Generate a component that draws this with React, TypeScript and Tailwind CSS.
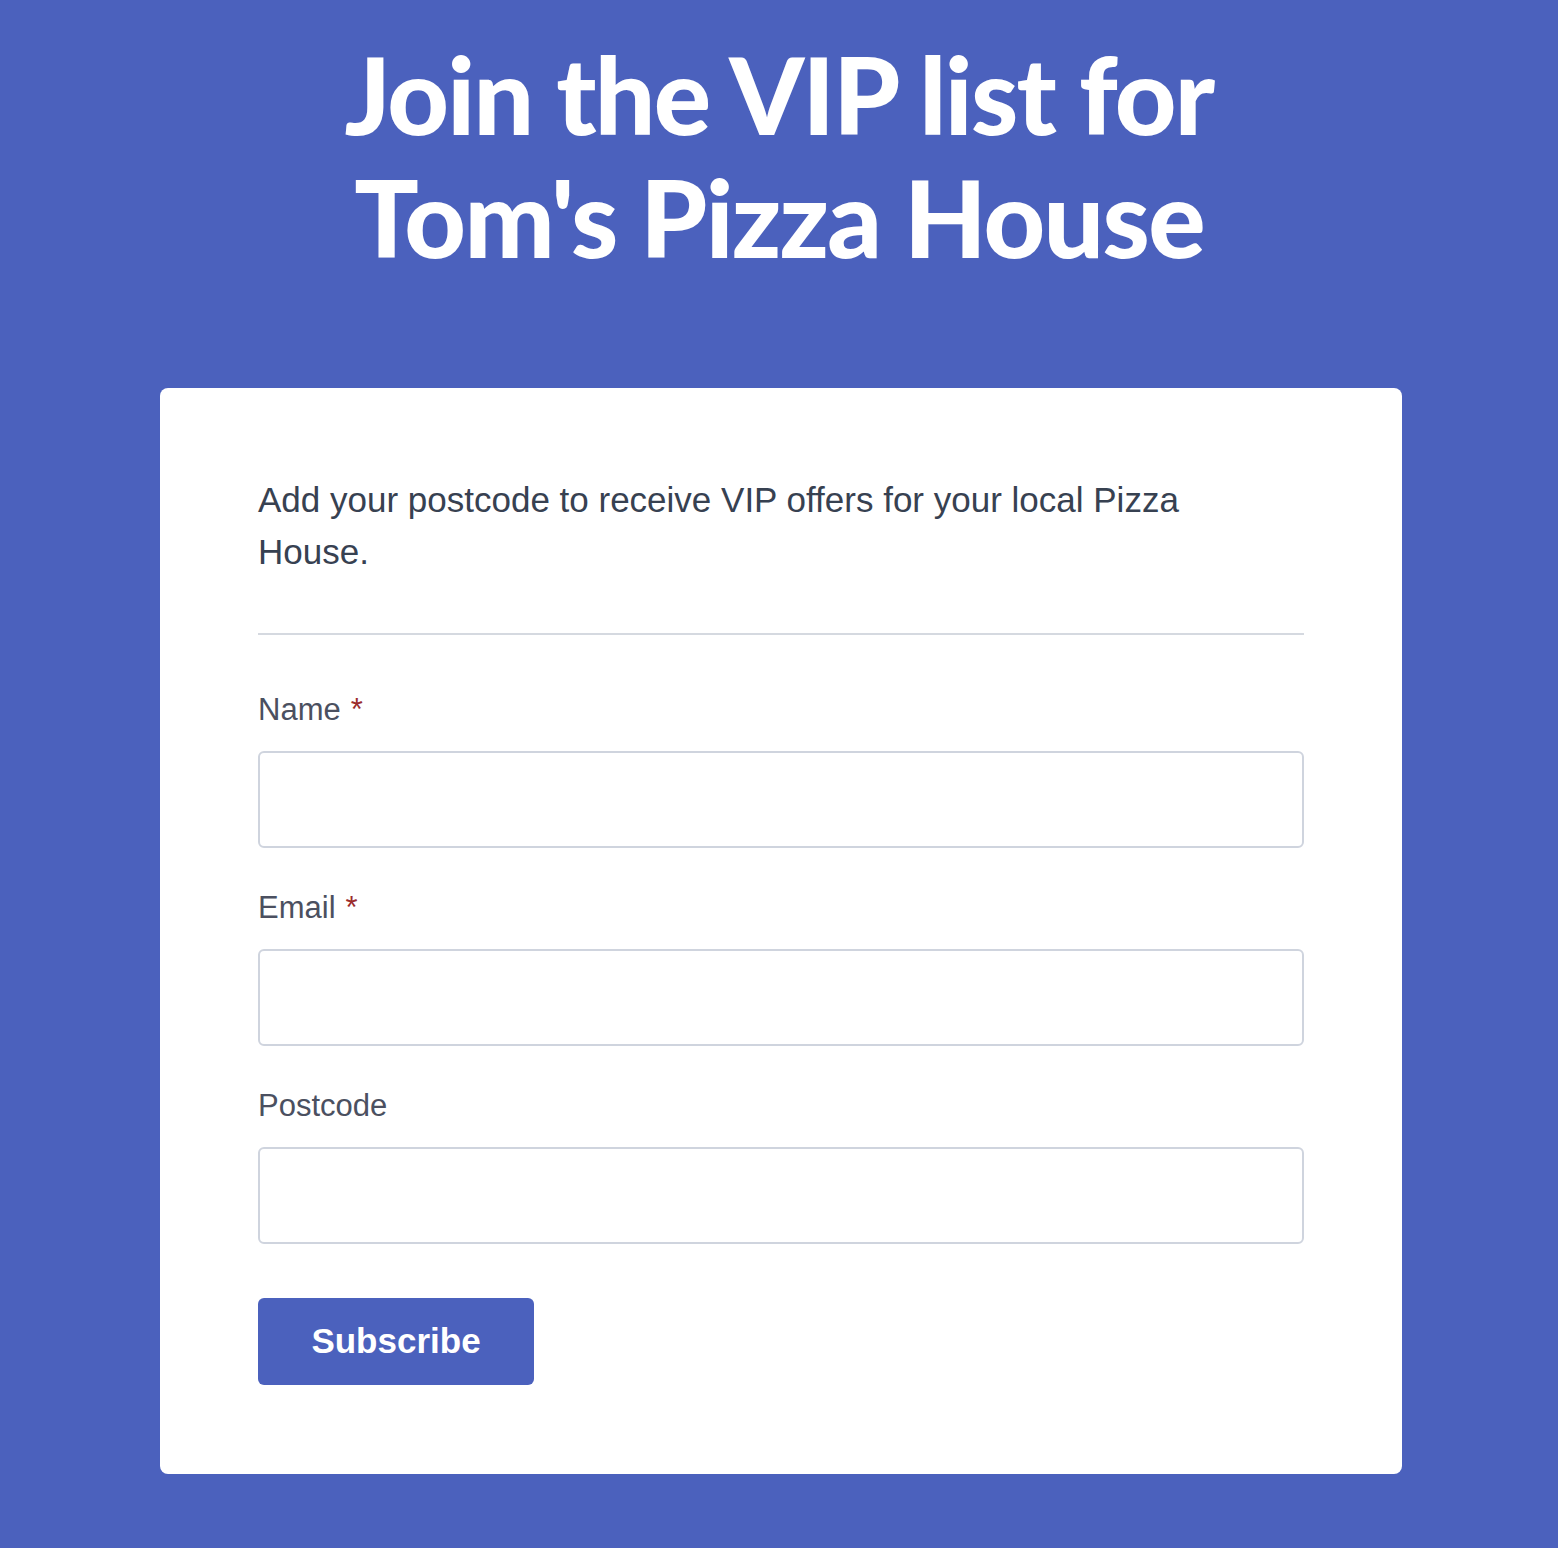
import React from "react";

const fields = [
  { label: "Name", required: true, type: "text" },
  { label: "Email", required: true, type: "email" },
  { label: "Postcode", required: false, type: "text" },
];

export default function App() {
  return (
    <div className="min-h-screen w-full bg-[#4b61bd] pt-[32px] pb-[74px]">
      {/* Heading */}
      <h1 className="text-center font-['Lato',sans-serif] font-black text-white text-[107px] leading-[123px] tracking-[-1.7px]">
        Join the VIP list for
        <br />
        Tom's Pizza House
      </h1>

      {/* Card */}
      <div className="ml-[160px] mt-[110px] w-[1242px] rounded-[8px] bg-white px-[98px] pt-[86px] pb-[89px] font-['Liberation_Sans',Arial,sans-serif]">
        <p className="max-w-[960px] text-[35px] leading-[52px] text-[#374151]">
          Add your postcode to receive VIP offers for your local Pizza House.
        </p>

        <div className="mt-[55px] mb-[52px] h-[2px] bg-[#d5d9e0]" />

        <form className="flex flex-col gap-[37px]" onSubmit={(e) => e.preventDefault()}>
          {fields.map((f) => (
            <div key={f.label} className="flex flex-col gap-[19px]">
              <label className="text-[31px] leading-[45px] text-[#4b5060]">
                {f.label}
                {f.required && <span className="ml-[10px] text-[#9b2c2c]">*</span>}
              </label>
              <input
                type={f.type}
                className="h-[97px] w-full rounded-[6px] border-2 border-[#cfd4de] bg-white px-4 text-[30px] outline-none"
              />
            </div>
          ))}

          <div className="pt-[17px]">
            <button
              type="submit"
              className="h-[87px] w-[276px] rounded-[6px] bg-[#4b61bd] text-[35px] font-bold text-white"
            >
              Subscribe
            </button>
          </div>
        </form>
      </div>
    </div>
  );
}
